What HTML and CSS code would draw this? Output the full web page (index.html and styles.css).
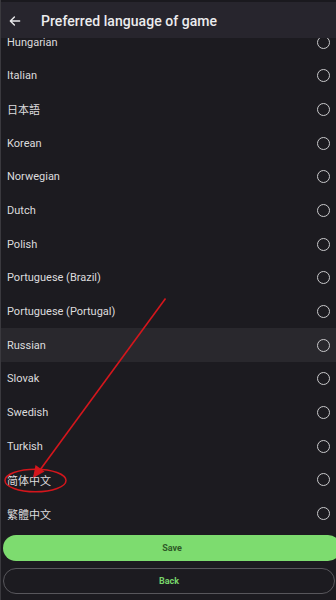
FILE: index.html
```html
<!DOCTYPE html>
<html>
<head>
<meta charset="utf-8">
<link rel="stylesheet" href="styles.css">
</head>
<body>
<div class="screen">
  <header class="topbar">
    <svg class="back-icon" width="14" height="14" viewBox="0 0 24 24"><path d="M20 12H5M11 5l-7 7 7 7" fill="none" stroke="#e8e8ea" stroke-width="2.4" stroke-linecap="round" stroke-linejoin="round"/></svg>
    <h1 class="title">Preferred language of game</h1>
  </header>
  <div class="viewport">
    <ul class="list">
      <li class="row"><span>Hungarian</span><i class="radio"></i></li>
      <li class="row"><span>Italian</span><i class="radio"></i></li>
      <li class="row"><span>日本語</span><i class="radio"></i></li>
      <li class="row"><span>Korean</span><i class="radio"></i></li>
      <li class="row"><span>Norwegian</span><i class="radio"></i></li>
      <li class="row"><span>Dutch</span><i class="radio"></i></li>
      <li class="row"><span>Polish</span><i class="radio"></i></li>
      <li class="row"><span>Portuguese (Brazil)</span><i class="radio"></i></li>
      <li class="row"><span>Portuguese (Portugal)</span><i class="radio"></i></li>
      <li class="row active"><span>Russian</span><i class="radio"></i></li>
      <li class="row"><span>Slovak</span><i class="radio"></i></li>
      <li class="row"><span>Swedish</span><i class="radio"></i></li>
      <li class="row"><span>Turkish</span><i class="radio"></i></li>
      <li class="row"><span>简体中文</span><i class="radio"></i></li>
      <li class="row"><span>繁體中文</span><i class="radio"></i></li>
    </ul>
  </div>
  <div class="actions">
    <button class="btn save">Save</button>
    <button class="btn back">Back</button>
  </div>
  <svg class="annotation" width="336" height="600" viewBox="0 0 336 600">
    <line x1="165.5" y1="298.5" x2="40" y2="470" stroke="#d4161c" stroke-width="1.6"/>
    <polygon points="33,478 35.5,465 44.5,471.5" fill="#d4161c"/>
    <ellipse cx="35.5" cy="480.5" rx="30.5" ry="11.3" fill="none" stroke="#d4161c" stroke-width="1.5"/>
  </svg>
</div>
</body>
</html>
```
FILE: styles.css
```css
* { box-sizing: border-box; }
html, body { margin: 0; padding: 0; }
body {
  width: 336px;
  height: 600px;
  background: #1c1b20;
  font-family: Roboto, "Noto Sans", "Noto Sans CJK SC", sans-serif;
  overflow: hidden;
}
.screen {
  position: relative;
  width: 336px;
  height: 600px;
  display: flex;
  flex-direction: column;
  background: #1c1b20;
  border-left: 1px solid #3a393e;
}
.topbar {
  height: 38px;
  flex: none;
  display: flex;
  align-items: center;
  gap: 19px;
  padding: 2px 0 0 7px;
  background: #27252d;
  border-top: 2px solid #1a191e;
}
.back-icon { flex: none; }
.title {
  margin: 0;
  font-size: 14px;
  font-weight: 500;
  color: #ececee;
  letter-spacing: 0.05px;
}
.viewport {
  height: 492px;
  flex: none;
  overflow: hidden;
}
.list {
  list-style: none;
  margin: -12.8px 0 0 0;
  padding: 0;
}
.row {
  height: 33.7px;
  display: flex;
  align-items: center;
  justify-content: space-between;
  padding: 0 6px 0 6px;
  color: #dcdcde;
  font-size: 11px;
}
.row.active { background: #29282d; }
.radio {
  width: 13px;
  height: 13px;
  border: 1.6px solid #c9c9cb;
  border-radius: 50%;
  display: block;
}
.actions {
  display: flex;
  flex-direction: column;
  gap: 7px;
  padding: 5px 0 0 2px;
}
.btn {
  height: 26px;
  border-radius: 13px;
  font-family: Roboto, "Noto Sans", sans-serif;
  font-size: 9px;
  font-weight: 700;
  cursor: pointer;
}
.save {
  width: 338px;
  background: #7ddc6f;
  border: none;
  color: #2f5a28;
}
.back {
  width: 332px;
  background: transparent;
  border: 1.5px solid #58575c;
  color: #77d46a;
}
.annotation {
  position: absolute;
  left: -1px;
  top: 0;
  pointer-events: none;
}
```
